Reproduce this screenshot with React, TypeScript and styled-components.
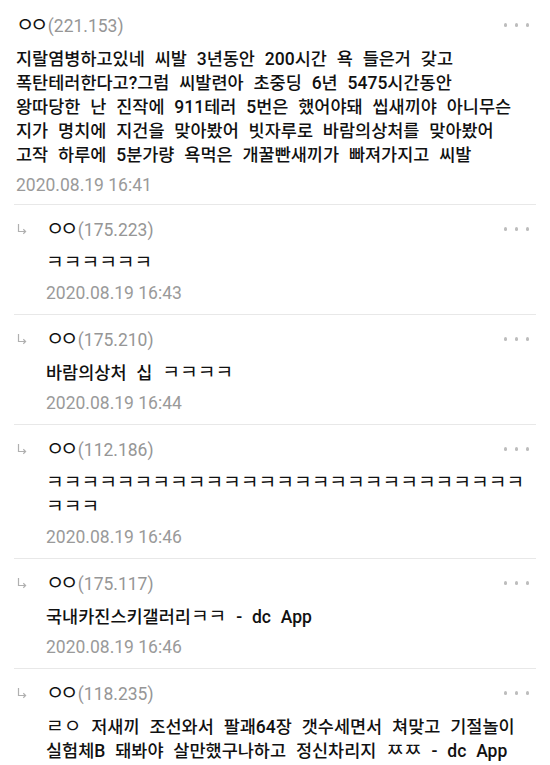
import styled, { createGlobalStyle } from 'styled-components';

const GlobalStyle = createGlobalStyle`
  html, body {
    margin: 0;
    padding: 0;
    background: #fff;
  }
  body {
    font-family: Roboto, "Noto Sans CJK KR", sans-serif;
    color: #111;
  }
`;

const List = styled.div`
  width: 550px;
  height: 765px;
  overflow: hidden;
  background: #fff;
  display: flex;
  flex-direction: column;
`;

const Item = styled.div<{ $reply?: boolean }>`
  margin: 0 14px;
  padding: ${(p) => (p.$reply ? '12px 4px 9px 3px' : '13px 4px 7px 2px')};
  border-bottom: 1px solid #e8e8e8;
  display: flex;
`;

const Arrow = styled.div`
  width: 29px;
  flex: none;
  height: 24px;
  display: flex;
  align-items: center;
`;

const Content = styled.div`
  flex: 1;
  min-width: 0;
  display: flex;
  flex-direction: column;
`;

const Head = styled.div`
  display: flex;
  align-items: center;
  justify-content: space-between;
  height: 24px;
`;

const Name = styled.div`
  font-size: 17.5px;
  line-height: 24px;
  color: #969696;
  white-space: nowrap;
`;

const Nick = styled.span`
  font-size: 20px;
  letter-spacing: -4.5px;
  margin-right: 4px;
  color: #111;
`;

const Dots = styled.div`
  display: flex;
  gap: 7.5px;
  padding-right: 3px;
`;

const Dot = styled.span`
  width: 3.5px;
  height: 3.5px;
  border-radius: 50%;
  background: #bdbdbd;
`;

const Body = styled.div`
  margin-top: 10px;
  font-size: 17.5px;
  font-weight: 500;
  line-height: 24px;
  word-spacing: 5.5px;
  color: #111;
`;

const Line = styled.div`
  white-space: nowrap;
`;

const Jamo = styled.span`
  font-size: 1.1em;
  font-weight: 400;
  line-height: 1;
`;

const Date = styled.div`
  margin-top: 6px;
  font-size: 17.5px;
  line-height: 24px;
  color: #9a9a9a;
`;

// compatibility jamo (ㅋ, ㅇ, ㄹ, ㅉ) render a bit larger than syllables in the original
const renderLine = (text: string) =>
  text.split(/([\u3131-\u318E]+)/).map((part, i) =>
    /[\u3131-\u318E]/.test(part) ? <Jamo key={i}>{part}</Jamo> : part
  );

interface CommentProps {
  reply?: boolean;
  ip: string;
  lines: string[];
  date?: string;
}

const Comment = ({ reply, ip, lines, date }: CommentProps) => (
  <Item $reply={reply}>
    {reply && (
      <Arrow>
        <svg width="10" height="12" viewBox="0 0 10 12" fill="none" stroke="#b0b0b0" strokeWidth="1.2">
          <path d="M1.5 1V8.5H8.5" />
          <path d="M6.3 6.3L8.6 8.5L6.3 10.7" />
        </svg>
      </Arrow>
    )}
    <Content>
      <Head>
        <Name>
          <Nick>ㅇㅇ</Nick>({ip})
        </Name>
        <Dots>
          <Dot />
          <Dot />
          <Dot />
        </Dots>
      </Head>
      <Body>
        {lines.map((line, i) => (
          <Line key={i}>{renderLine(line)}</Line>
        ))}
      </Body>
      {date && <Date>{date}</Date>}
    </Content>
  </Item>
);

const comments: CommentProps[] = [
  {
    ip: '221.153',
    lines: [
      '지랄염병하고있네 씨발 3년동안 200시간 욕 들은거 갖고',
      '폭탄테러한다고?그럼 씨발련아 초중딩 6년 5475시간동안',
      '왕따당한 난 진작에 911테러 5번은 했어야돼 씹새끼야 아니무슨',
      '지가 명치에 지건을 맞아봤어 빗자루로 바람의상처를 맞아봤어',
      '고작 하루에 5분가량 욕먹은 개꿀빤새끼가 빠져가지고 씨발',
    ],
    date: '2020.08.19 16:41',
  },
  { reply: true, ip: '175.223', lines: ['ㅋㅋㅋㅋㅋㅋ'], date: '2020.08.19 16:43' },
  { reply: true, ip: '175.210', lines: ['바람의상처 십 ㅋㅋㅋㅋ'], date: '2020.08.19 16:44' },
  {
    reply: true,
    ip: '112.186',
    lines: ['ㅋ'.repeat(27), 'ㅋㅋㅋ'],
    date: '2020.08.19 16:46',
  },
  { reply: true, ip: '175.117', lines: ['국내카진스키갤러리ㅋㅋ - dc App'], date: '2020.08.19 16:46' },
  {
    reply: true,
    ip: '118.235',
    lines: ['ㄹㅇ 저새끼 조선와서 팔괘64장 갯수세면서 쳐맞고 기절놀이', '실험체B 돼봐야 살만했구나하고 정신차리지 ㅉㅉ - dc App'],
  },
];

const App = () => (
  <>
    <GlobalStyle />
    <List>
      {comments.map((c, i) => (
        <Comment key={i} {...c} />
      ))}
    </List>
  </>
);

export default App;
